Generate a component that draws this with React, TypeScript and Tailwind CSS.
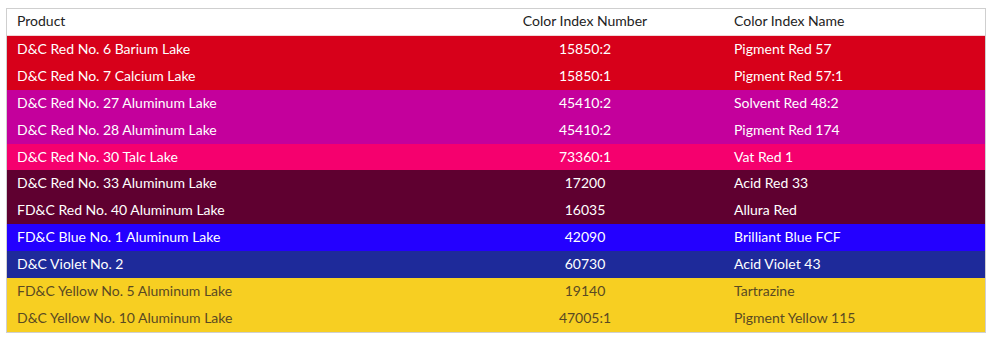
import React from 'react';

type Row = { product: string; number: string; name: string; bg: string; text: string };

const rows: Row[] = [
  { product: 'D&C Red No. 6 Barium Lake', number: '15850:2', name: 'Pigment Red 57', bg: 'bg-[#d7001a]', text: 'text-white' },
  { product: 'D&C Red No. 7 Calcium Lake', number: '15850:1', name: 'Pigment Red 57:1', bg: 'bg-[#d7001a]', text: 'text-white' },
  { product: 'D&C Red No. 27 Aluminum Lake', number: '45410:2', name: 'Solvent Red 48:2', bg: 'bg-[#c4009c]', text: 'text-white' },
  { product: 'D&C Red No. 28 Aluminum Lake', number: '45410:2', name: 'Pigment Red 174', bg: 'bg-[#c4009c]', text: 'text-white' },
  { product: 'D&C Red No. 30 Talc Lake', number: '73360:1', name: 'Vat Red 1', bg: 'bg-[#f5006e]', text: 'text-white' },
  { product: 'D&C Red No. 33 Aluminum Lake', number: '17200', name: 'Acid Red 33', bg: 'bg-[#5f0030]', text: 'text-white' },
  { product: 'FD&C Red No. 40 Aluminum Lake', number: '16035', name: 'Allura Red', bg: 'bg-[#5f0030]', text: 'text-white' },
  { product: 'FD&C Blue No. 1 Aluminum Lake', number: '42090', name: 'Brilliant Blue FCF', bg: 'bg-[#2400ff]', text: 'text-white' },
  { product: 'D&C Violet No. 2', number: '60730', name: 'Acid Violet 43', bg: 'bg-[#1e2a9a]', text: 'text-white' },
  { product: 'FD&C Yellow No. 5 Aluminum Lake', number: '19140', name: 'Tartrazine', bg: 'bg-[#f7cf22]', text: 'text-[#5a4a22]' },
  { product: 'D&C Yellow No. 10 Aluminum Lake', number: '47005:1', name: 'Pigment Yellow 115', bg: 'bg-[#f7cf22]', text: 'text-[#5a4a22]' },
];

export default function App() {
  return (
    <div className="w-[995px] h-[344px] bg-white pl-[6px] pt-[8px] font-['Lato','Liberation_Sans',sans-serif] text-[14px]">
      <div className="w-[980px] border border-[#cfcfcf]">
        <div className="grid grid-cols-[439px_278px_1fr] h-[27px] items-center pb-[3px] text-[#222] border-b border-[#f3d4d6]">
          <div className="pl-[10px]">Product</div>
          <div className="text-center">Color Index Number</div>
          <div className="pl-[10px]">Color Index Name</div>
        </div>
        {rows.map((r, i) => (
          <div key={i} className={`grid grid-cols-[439px_278px_1fr] h-[26.9px] items-center pb-[2px] ${r.bg} ${r.text}`}>
            <div className="pl-[10px]">{r.product}</div>
            <div className="text-center">{r.number}</div>
            <div className="pl-[10px]">{r.name}</div>
          </div>
        ))}
      </div>
    </div>
  );
}
